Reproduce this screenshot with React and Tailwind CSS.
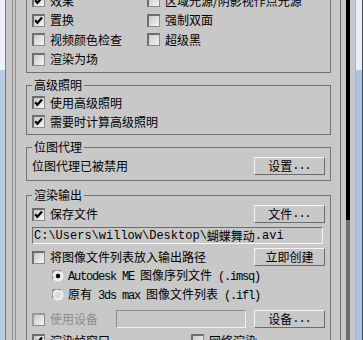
import React from "react";

// 复选框 (凹陷样式)
const Check = ({ checked, disabled }) => (
  <svg width="13" height="13" viewBox="0 0 13 13" className="shrink-0">
    <defs>
      <linearGradient id="cbFill" x1="0" y1="0" x2="1" y2="1">
        <stop offset="0" stopColor="#c9c9c9" />
        <stop offset="1" stopColor="#f6f6f6" />
      </linearGradient>
    </defs>
    <rect x="0" y="0" width="13" height="13" fill={disabled ? "#9a9a9a" : "#6e6e6e"} />
    <rect x="2" y="2" width="10" height="10" fill="url(#cbFill)" />
    <rect x="12" y="1" width="1" height="12" fill="#8a8a8a" />
    <rect x="1" y="12" width="12" height="1" fill="#8a8a8a" />
    {checked && (
      <path d="M3.2 6.2 L5.4 8.8 L10 3.6" stroke="#000" strokeWidth="2.2" fill="none" />
    )}
  </svg>
);

// 单选按钮
const Radio = ({ checked }) => (
  <svg width="12" height="12" viewBox="0 0 12 12" className="shrink-0">
    <circle cx="6" cy="6" r="5.5" fill="#f2f2f2" />
    <path d="M1.2 8.5 A5 5 0 0 1 8.5 1.2" stroke="#8a8a8a" strokeWidth="1.6" fill="none" />
    <circle cx="6" cy="6" r="3.6" fill={checked ? "#e4e4e4" : "#dcdcdc"} />
    {checked && <circle cx="6" cy="6" r="2.2" fill="#000" />}
  </svg>
);

const Dots = () => (
  <span className="font-['Liberation_Mono',monospace] tracking-[-1px]">...</span>
);

const Btn = ({ children }) => (
  <div className="flex h-[18px] w-[71px] shrink-0 items-center justify-center border border-t-[#f4f4f4] border-l-[#f4f4f4] border-r-[#6c6c6c] border-b-[#6c6c6c]">
    {children}
  </div>
);

const CheckRow = ({ label, checked, disabled, className = "" }) => (
  <div className={`flex items-center gap-[5px] ${className}`}>
    <Check checked={checked} disabled={disabled} />
    <span className={disabled ? "text-[#8c8c8c]" : ""}>{label}</span>
  </div>
);

const Group = ({ title, children, className = "" }) => (
  <fieldset className={`border border-[#707070] px-[5px] ${className}`}>
    <legend className="px-[2px]">{title}</legend>
    {children}
  </fieldset>
);

const Mono = ({ children }) => (
  <span className="font-['Liberation_Mono',monospace] tracking-[-1.2px]">{children}</span>
);

export default function App() {
  return (
    <div className="flex h-[340px] w-[363px] overflow-hidden bg-[#c8c8c8] font-['Noto_Sans_CJK_SC',sans-serif] text-[12px] leading-[16px] text-black">
      {/* 窗口左边框 */}
      <div className="flex w-[5px] flex-col">
        <div className="h-[70px] bg-[#eef3f9]" />
        <div className="flex-1 bg-[#b7cbe3]" />
      </div>
      <div className="w-px bg-[#7c7c7c]" />
      <div className="w-[6px]" />
      <div className="w-px bg-[#8e8e8e]" />
      <div className="w-[2px]" />
      <div className="w-px bg-[#8e8e8e]" />

      {/* 卷展栏内容 */}
      <div className="w-[324px] pl-[10px] pr-[9px]">
        {/* 选项 (上方被截断) */}
        <div className="-mt-[9px] border-x border-b border-[#707070] px-[5px] pb-[3px]">
          <div className="grid grid-cols-[115px_1fr]">
            <CheckRow className="h-[19.5px]" label="效果" checked />
            <CheckRow className="h-[19.5px]" label="区域光源/阴影视作点光源" />
            <CheckRow className="h-[19.5px]" label="置换" checked />
            <CheckRow className="h-[19.5px]" label="强制双面" />
            <CheckRow className="h-[19.5px]" label="视频颜色检查" />
            <CheckRow className="h-[19.5px]" label="超级黑" />
            <CheckRow className="h-[19.5px]" label="渲染为场" />
          </div>
        </div>

        {/* 高级照明 */}
        <Group title="高级照明" className="mt-[4px] pb-[3px]">
          <CheckRow className="h-[19px]" label="使用高级照明" checked />
          <CheckRow className="h-[19px]" label="需要时计算高级照明" checked />
        </Group>

        {/* 位图代理 */}
        <Group title="位图代理" className="mt-[4px] pb-[5px]">
          <div className="flex items-center justify-between pt-[2px]">
            <span>位图代理已被禁用</span>
            <Btn>
              设置<Dots />
            </Btn>
          </div>
        </Group>

        {/* 渲染输出 */}
        <Group title="渲染输出" className="mt-[6px]">
          <div className="flex items-center justify-between pt-[2px]">
            <CheckRow label="保存文件" checked />
            <Btn>
              文件<Dots />
            </Btn>
          </div>
          <div className="mt-[4px] flex h-[17px] w-[291px] items-center border border-t-[#6c6c6c] border-l-[#6c6c6c] border-r-[#f4f4f4] border-b-[#f4f4f4] pl-[1px]">
            <span className="font-['Liberation_Mono',monospace]">{"C:\\Users\\willow\\Desktop\\"}</span>
            <span>蝴蝶舞动</span>
            <span className="font-['Liberation_Mono',monospace]">.avi</span>
          </div>
          <div className="mt-[4px] flex items-center justify-between">
            <CheckRow label="将图像文件列表放入输出路径" />
            <Btn>立即创建</Btn>
          </div>
          <div className="flex h-[19px] items-center gap-[4px] pl-[20px]">
            <Radio checked />
            <span className="whitespace-nowrap">
              <Mono>Autodesk ME </Mono>图像序列文件<Mono> (.imsq)</Mono>
            </span>
          </div>
          <div className="flex h-[19px] items-center gap-[4px] pl-[20px]">
            <Radio />
            <span className="whitespace-nowrap">
              原有<Mono> 3ds max </Mono>图像文件列表<Mono> (.ifl)</Mono>
            </span>
          </div>
          <div className="mt-[6px] flex items-center justify-between">
            <CheckRow label="使用设备" disabled />
            <div className="ml-auto mr-[8px] h-[18px] w-[130px] border border-t-[#8c8c8c] border-l-[#8c8c8c] border-r-[#f0f0f0] border-b-[#f0f0f0]" />
            <Btn>
              设备<Dots />
            </Btn>
          </div>
          <div className="mt-[3px] grid h-[19px] grid-cols-[159px_1fr] items-center">
            <CheckRow label="渲染帧窗口" checked />
            <CheckRow label="网络渲染" />
          </div>
        </Group>
      </div>

      <div className="w-px bg-[#707070]" />
      <div className="w-[5px]" />
      {/* 滚动条 */}
      <div className="flex w-[4px] flex-col">
        <div className="h-[220px] bg-black" />
        <div className="flex-1 bg-[#6e6e6e]" />
      </div>
      <div className="w-[5px]" />
      {/* 窗口右边框 */}
      <div className="w-px bg-[#9fb9d6]" />
      <div className="flex w-[6px] flex-col">
        <div className="h-[70px] bg-[#e8eff8]" />
        <div className="flex-1 bg-[#aac3e0]" />
      </div>
      <div className="w-px bg-[#4a4a4a]" />
    </div>
  );
}
